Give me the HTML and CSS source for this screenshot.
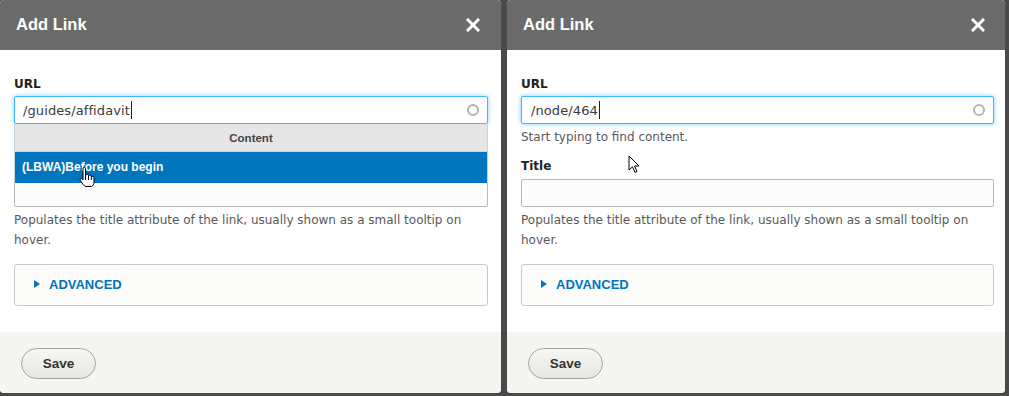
FILE: index.html
```html
<!DOCTYPE html>
<html lang="en">
<head>
<meta charset="utf-8">
<title>Add Link</title>
<link rel="stylesheet" href="styles.css">
</head>
<body>
<div class="screen">
  <section class="dialog dialog-left">
    <header class="titlebar">
      <h2 class="title">Add Link</h2>
      <span class="close"><svg width="14" height="14" viewBox="0 0 14 14"><path d="M2 2 L12 12 M12 2 L2 12" stroke="#fff" stroke-width="3" stroke-linecap="square"/></svg></span>
    </header>
    <div class="content">
      <div class="field url-field">
        <div class="label">URL</div>
        <div class="input-wrap">
          <div class="input focused"><span class="value">/guides/affidavit</span><span class="caret"></span></div>
          <span class="throbber"></span>
        </div>
        <div class="autocomplete">
          <div class="ac-group">Content</div>
          <div class="ac-item">(LBWA)Before you begin</div>
        </div>
        <div class="help covered">Start typing to find content.</div>
      </div>
      <div class="field title-field">
        <div class="label covered">Title</div>
        <div class="input plain"></div>
        <div class="help desc">Populates the title attribute of the link, usually shown as a small tooltip on hover.</div>
      </div>
      <div class="details">
        <span class="arrow"></span><span class="summary">ADVANCED</span>
      </div>
    </div>
    <footer class="buttons">
      <span class="btn">Save</span>
    </footer>
    <svg class="cursor-hand" width="18" height="22" viewBox="0 0 18 22"><path d="M5.5 1.5 C6.5 1 7.5 1.5 7.5 2.5 L7.5 9 L8.5 8.5 C9.5 8.2 10.5 8.5 10.5 9.5 L11.5 9.2 C12.5 9 13.3 9.5 13.3 10.5 L14.3 10.4 C15.3 10.5 16 11 16 12 L16 16 C16 18 15 20 13.5 20.5 L7.5 20.5 C6 20 4 17 2.5 14.5 C1.8 13.5 2.2 12.5 3.2 12.5 C4 12.5 4.5 13.2 5 14 L5 3 C5 2.3 5.2 1.7 5.5 1.5 Z" fill="#fff" stroke="#000" stroke-width="1"/><path d="M7.5 9 L7.5 14 M10.5 9.5 L10.5 14 M13.3 10.5 L13.3 14" stroke="#000" stroke-width="1"/></svg>
  </section>

  <section class="dialog dialog-right">
    <header class="titlebar">
      <h2 class="title">Add Link</h2>
      <span class="close"><svg width="14" height="14" viewBox="0 0 14 14"><path d="M2 2 L12 12 M12 2 L2 12" stroke="#fff" stroke-width="3" stroke-linecap="square"/></svg></span>
    </header>
    <div class="content">
      <div class="field url-field">
        <div class="label">URL</div>
        <div class="input-wrap">
          <div class="input focused"><span class="value">/node/464</span><span class="caret"></span></div>
          <span class="throbber"></span>
        </div>
        <div class="help">Start typing to find content.</div>
      </div>
      <div class="field title-field">
        <div class="label">Title</div>
        <div class="input plain"></div>
        <div class="help desc">Populates the title attribute of the link, usually shown as a small tooltip on hover.</div>
      </div>
      <div class="details">
        <span class="arrow"></span><span class="summary">ADVANCED</span>
      </div>
    </div>
    <footer class="buttons">
      <span class="btn">Save</span>
    </footer>
    <svg class="cursor-arrow" width="14" height="20" viewBox="0 0 14 20"><path d="M1 1 L1 15 L4.5 11.8 L7 17.5 L9 16.6 L6.6 11 L11 11 Z" fill="#fff" stroke="#000" stroke-width="1" stroke-linejoin="miter"/></svg>
  </section>
</div>
</body>
</html>
```

FILE: styles.css
```css
* { box-sizing: border-box; }
html, body { margin: 0; padding: 0; }
body {
  background: #4a4a4a;
  font-family: "DejaVu Sans", Verdana, sans-serif;
  width: 1009px;
  height: 396px;
  overflow: hidden;
}
.screen {
  display: flex;
  gap: 6px;
  align-items: flex-start;
}
.dialog {
  position: relative;
  height: 393px;
  background: #fff;
  border-radius: 4px;
  overflow: hidden;
  display: flex;
  flex-direction: column;
}
.dialog-left { width: 501px; }
.dialog-right { width: 498px; }

.titlebar {
  height: 50px;
  flex: none;
  background: #6b6b6b;
  display: flex;
  align-items: center;
  justify-content: space-between;
  padding: 0 20px 0 16px;
}
.dialog-left .titlebar { padding-right: 21px; }
.title {
  margin: 0;
  color: #fff;
  font-family: "Liberation Sans", Arial, sans-serif;
  font-weight: bold;
  font-size: 16.5px;
  line-height: 20px;
  position: relative;
  top: -1px;
}
.close { display: flex; width: 14px; height: 14px; }

.content {
  flex: 1;
  padding: 26px 13px 0 14px;
}
.dialog-right .content { padding-right: 11px; }

.field { position: relative; }
.label {
  font-family: "DejaVu Sans", Verdana, sans-serif;
  font-weight: bold;
  font-size: 12px;
  line-height: 16px;
  color: #222;
  margin-bottom: 4px;
}
.title-field .label { margin-bottom: 5px; }
.title-field { margin-top: 13px; }
.covered { visibility: hidden; }

.input-wrap { position: relative; }
.input {
  height: 28px;
  border: 1px solid #b8b8b8;
  border-radius: 2px;
  background: #fcfcfa;
  font-size: 13px;
  color: #3b3b3b;
  padding: 0 8px;
  display: flex;
  align-items: center;
  letter-spacing: 0.1px;
}
.input.focused {
  background: #fff;
  border-color: #40b6ff;
  box-shadow: 0 0 5px rgba(64, 182, 255, 0.65);
}
.dialog-right .input.focused { padding-left: 9px; }
.caret {
  display: inline-block;
  width: 1px;
  height: 18px;
  background: #222;
  margin-left: 1px;
}
.throbber {
  position: absolute;
  right: 9px;
  top: 8px;
  width: 12px;
  height: 12px;
  border: 2px solid #b4b4b4;
  border-radius: 50%;
}

.help {
  font-size: 12px;
  line-height: 16px;
  color: #595959;
  margin-top: 5px;
}
.help.desc {
  line-height: 20px;
  margin-top: 3px;
}

.autocomplete {
  position: absolute;
  left: 0;
  right: 0;
  top: 48px;
  border-left: 1px solid #c5d3dc;
  border-right: 1px solid #c5d3dc;
  z-index: 2;
}
.ac-group {
  height: 28px;
  background: #e6e6e6;
  border-bottom: 1px solid #c5d3dc;
  font-family: "Liberation Sans", Arial, sans-serif;
  font-weight: bold;
  font-size: 11.5px;
  color: #444;
  display: flex;
  align-items: center;
  justify-content: center;
  padding-top: 1px;
}
.ac-item {
  height: 31px;
  background: #0074bd;
  color: #fff;
  font-family: "Liberation Sans", Arial, sans-serif;
  font-weight: bold;
  font-size: 12px;
  display: flex;
  align-items: center;
  padding-left: 7px;
  padding-bottom: 2px;
}

.details {
  margin-top: 14px;
  height: 42px;
  border: 1px solid #c8c8c8;
  border-radius: 3px;
  background: #fcfcfa;
  display: flex;
  align-items: center;
  padding-left: 19px;
  padding-bottom: 2px;
}
.arrow {
  width: 0;
  height: 0;
  border-left: 6px solid #0074bd;
  border-top: 4px solid transparent;
  border-bottom: 4px solid transparent;
  margin-right: 9px;
}
.summary {
  font-family: "Liberation Sans", Arial, sans-serif;
  font-weight: bold;
  font-size: 13px;
  color: #0074bd;
}

.buttons {
  flex: none;
  height: 61px;
  background: #f5f5f2;
  padding: 16px 0 0 21px;
}
.btn {
  display: inline-flex;
  align-items: center;
  justify-content: center;
  width: 75px;
  height: 31px;
  border: 1px solid #a6a6a6;
  border-radius: 20px;
  background: linear-gradient(#f6f6f3, #e8e7e0);
  font-family: "Liberation Sans", Arial, sans-serif;
  font-weight: bold;
  font-size: 13.5px;
  color: #333;
  padding-bottom: 1px;
}

.cursor-hand {
  position: absolute;
  left: 78px;
  top: 166px;
  z-index: 3;
}
.cursor-arrow {
  position: absolute;
  left: 121px;
  top: 155px;
  z-index: 3;
}
```
